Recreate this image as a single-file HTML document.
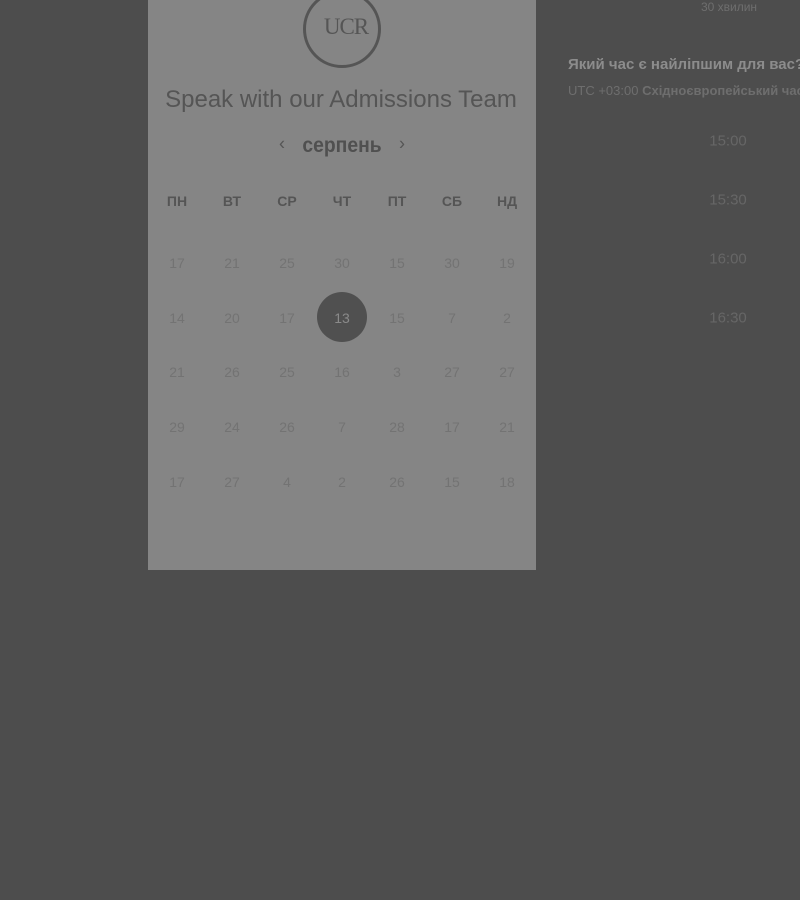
<!DOCTYPE html>
<html><head><meta charset="utf-8"><style>
body{margin:0;width:800px;height:900px;background:#4d4d4d;position:relative;overflow:hidden;font-family:"Liberation Sans","DejaVu Sans",sans-serif}
.panel{position:absolute;left:148px;top:0;width:388px;height:570px;background:#858585}
.c{position:absolute;transform:translate(-50%,-50%);white-space:nowrap}
.n{color:#737373;font-size:14px}
.h{color:#555;font-size:14px;font-weight:bold}
.t{color:#666;font-size:15px;font-weight:300}
</style></head><body>
<div class="panel"></div>
<div class="c" style="left:342px;top:29px;width:72px;height:72px;border:3px solid #555;border-radius:50%;"></div>
<div class="c" style="left:346px;top:27px;font-family:'Liberation Serif',serif;font-size:23px;color:#555;letter-spacing:-1px">UCR</div>
<div class="c" style="left:341px;top:100px;font-size:24px;color:#555;">Speak with our Admissions Team</div>
<div class="c" style="left:282px;top:144px;font-size:18px;color:#555;">‹</div>
<div class="c" style="left:342px;top:146px;font-size:21px;color:#505050;font-weight:bold;transform:translate(-50%,-50%) scaleX(0.92)">серпень</div>
<div class="c" style="left:402px;top:144px;font-size:18px;color:#555;">›</div>
<div class="c h" style="left:177px;top:201px">ПН</div>
<div class="c h" style="left:232px;top:201px">ВТ</div>
<div class="c h" style="left:287px;top:201px">СР</div>
<div class="c h" style="left:342px;top:201px">ЧТ</div>
<div class="c h" style="left:397px;top:201px">ПТ</div>
<div class="c h" style="left:452px;top:201px">СБ</div>
<div class="c h" style="left:507px;top:201px">НД</div>
<div class="c" style="left:342px;top:317px;width:50px;height:50px;border-radius:50%;background:#505050"></div>
<div id="g"></div>
<script>
var d=[[17,21,25,30,15,30,19],[14,20,17,13,15,7,2],[21,26,25,16,3,27,27],[29,24,26,7,28,17,21],[17,27,4,2,26,15,18]];
var ys=[263,318,372,427,482],h='';
d.forEach(function(r,i){r.forEach(function(v,j){var s=(i==1&&j==3)?'color:#8a8a8a;':'';h+='<div class="c n" style="'+s+'left:'+(177+55*j)+'px;top:'+ys[i]+'px">'+v+'</div>';});});
document.getElementById('g').innerHTML=h;
</script>
<div class="c" style="left:729px;top:7px;font-size:12px;color:#6e6e6e">30 хвилин</div>
<div style="position:absolute;left:568px;top:56px;font-size:15px;font-weight:bold;color:#8c8c8c;white-space:nowrap">Який час є найліпшим для вас?</div>
<div style="position:absolute;left:568px;top:83px;font-size:13px;color:#6e6e6e;white-space:nowrap">UTC +03:00 <b>Східноєвропейський час</b></div>
<div class="c t" style="left:728px;top:141px">15:00</div>
<div class="c t" style="left:728px;top:200px">15:30</div>
<div class="c t" style="left:728px;top:259px">16:00</div>
<div class="c t" style="left:728px;top:318px">16:30</div>
</body></html>
